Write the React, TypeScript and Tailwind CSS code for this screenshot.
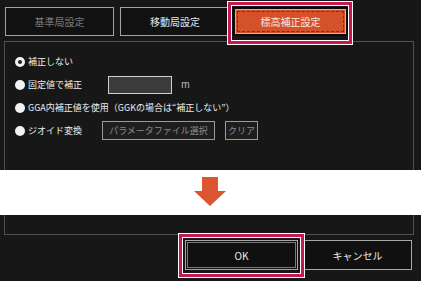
import React from 'react';

const font = { fontFamily: '"Noto Sans CJK JP", "Noto Sans", sans-serif' };

function Radio({ checked, label }: { checked?: boolean; label: string }) {
  return (
    <div className="flex items-center h-[23px]">
      <span className="w-[10px] h-[10px] rounded-full bg-[#f2f2f2] flex items-center justify-center">
        {checked && <span className="w-[4px] h-[4px] rounded-full bg-[#222]" />}
      </span>
      <span className="ml-[3px] text-[9px] text-[#ececec] whitespace-nowrap">{label}</span>
    </div>
  );
}

export default function App() {
  return (
    <div className="w-[421px] h-[281px] bg-[#171717] flex flex-col relative overflow-hidden" style={font}>
      {/* top dialog part */}
      <div className="h-[170px] flex flex-col pt-[7px]">
        <div className="flex h-[29px] ml-[5px]">
          <div className="w-[109px] border border-[#a3a3a3] bg-[#111] flex items-center justify-center text-[10px] text-[#7c7c7c]">
            基準局設定
          </div>
          <div className="w-[110px] ml-[6px] border border-[#a3a3a3] bg-[#111] flex items-center justify-center text-[10px] text-[#e8e8e8]">
            移動局設定
          </div>
          <div className="w-[115px] ml-[3px] border-2 border-[#0a0a0a] flex">
            <div className="flex-1 border border-[#b9b9b9] bg-[#d5512a] p-[1px] flex">
              <div className="flex-1 border border-dashed border-[#8a2a12] flex items-center justify-center text-[10px] text-[#fbe9e2]">
                標高補正設定
              </div>
            </div>
          </div>
        </div>
        <div className="flex-1 mt-[5px] mx-[4px] w-[410px] border-l border-r border-t border-[#505050] pl-[10px] pt-[8px]">
          <Radio checked label="補正しない" />
          <div className="flex items-center">
            <Radio label="固定値で補正" />
            <div className="ml-[26px] w-[64px] h-[18px] bg-[#3b3b3b] border border-[#d0d0d0]" />
            <span className="ml-[9px] text-[9.5px] text-[#bdbdbd]">m</span>
          </div>
          <Radio label="GGA内補正値を使用（GGKの場合は“補正しない”）" />
          <div className="flex items-center">
            <Radio label="ジオイド変換" />
            <div className="ml-[20px] w-[113px] h-[19px] border border-[#9a9a9a] bg-[#1e1e1e] flex items-center justify-center text-[9px] text-[#8c8c8c]">
              パラメータファイル選択
            </div>
            <div className="ml-[10px] w-[33px] h-[19px] border border-[#9a9a9a] bg-[#1e1e1e] flex items-center justify-center text-[9px] text-[#8c8c8c]">
              クリア
            </div>
          </div>
        </div>
      </div>

      {/* white band with arrow */}
      <div className="h-[45px] bg-white flex justify-center pt-[7px]">
        <svg width="33" height="30" viewBox="0 0 33 30">
          <polygon points="8,0 24,0 24,14 32,14 16,29 0,14 8,14" fill="#dc5530" />
        </svg>
      </div>

      {/* bottom dialog part */}
      <div className="flex-1 flex flex-col">
        <div className="h-[20px] mx-[4px] w-[410px] border-l border-r border-b border-[#505050]" />
        <div className="flex justify-end mt-[5px] pr-[9px]">
          <div className="w-[113px] h-[30px] border border-[#a8a8a8] bg-[#101010] p-[1px] flex">
            <div className="flex-1 border border-[#7a7a7a] flex items-center justify-center text-[10px] text-[#ececec]">
              OK
            </div>
          </div>
          <div className="w-[109px] h-[30px] ml-[5px] border border-[#a8a8a8] bg-[#101010] flex items-center justify-center text-[10px] text-[#ececec]">
            キャンセル
          </div>
        </div>
      </div>

      {/* annotation frames */}
      <div className="absolute left-[227px] top-[1px] w-[126px] h-[44px] border border-white">
        <div className="w-full h-full border-[3px] border-[#c51a4f]">
          <div className="w-full h-full border border-white" />
        </div>
      </div>
      <div className="absolute left-[178px] top-[233px] w-[127px] h-[45px] border border-white">
        <div className="w-full h-full border-[3px] border-[#c51a4f]">
          <div className="w-full h-full border border-white" />
        </div>
      </div>
    </div>
  );
}
